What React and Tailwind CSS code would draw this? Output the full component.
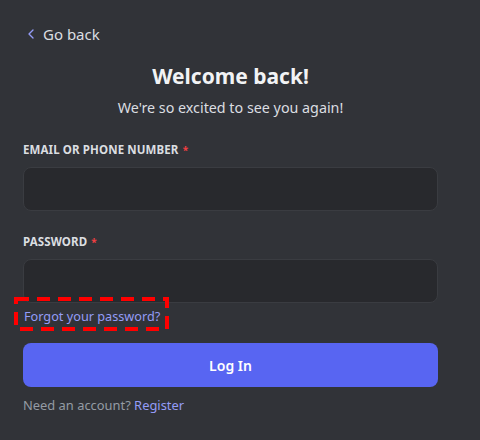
import React from 'react';
import { ChevronLeft } from 'lucide-react';

export default function App() {
    return (
        <div className="w-[480px] h-[440px] bg-[#313338] pl-[23px] pr-[42px] pt-[24px] font-['Noto_Sans','Open_Sans',sans-serif] overflow-hidden">
            {/* back link */}
            <div className="flex items-center h-[20px] text-[15px] text-[#dbdee1]">
                <ChevronLeft size={16} strokeWidth={2} className="text-[#949cf7] mr-[4px]" />
                <span>Go back</span>
            </div>

            <h1 className="mt-[17px] text-center text-[21px] leading-[30px] font-bold text-[#f2f3f5]">Welcome back!</h1>
            <p className="mt-[7px] text-center text-[14.3px] leading-[20px] text-[#dbdee1]">We're so excited to see you again!</p>

            <label className="block mt-[24px] text-[11.5px] leading-[16px] font-bold tracking-[0.01em] text-[#dbdee1] uppercase">
                Email or Phone Number <span className="text-[#f23f42] text-[10px] ml-[1px] align-top">*</span>
            </label>
            <input className="block w-full mt-[9px] h-[44px] rounded-[8px] bg-[#28292d] border border-[#3a3c41] outline-none px-3 text-[#dbdee1]" />

            <label className="block mt-[23px] text-[11.5px] leading-[16px] font-bold tracking-[0.01em] text-[#dbdee1] uppercase">
                Password <span className="text-[#f23f42] text-[10px] ml-[1px] align-top">*</span>
            </label>
            <input type="password" className="block w-full mt-[9px] h-[44px] rounded-[8px] bg-[#28292d] border border-[#3a3c41] outline-none px-3 text-[#dbdee1]" />

            <div className="relative mt-[3px] h-[20px]">
                <a className="absolute left-[1px] top-0 text-[12.7px] leading-[20px] text-[#949cf7]">Forgot your password?</a>
                {/* annotation box */}
                <svg className="absolute left-[-9px] top-[-9px]" width="155" height="34" viewBox="0 0 155 34">
                    <rect x="2" y="2" width="151" height="30" fill="none" stroke="#ff0000" strokeWidth="4" strokeDasharray="13 8" />
                </svg>
            </div>

            <button className="block w-full mt-[17px] h-[44px] rounded-[8px] bg-[#5865f2] text-white text-[14px] font-semibold">
                Log In
            </button>

            <p className="mt-[8px] text-[12.9px] leading-[20px] text-[#949ba4]">
                Need an account? <span className="text-[#949cf7]">Register</span>
            </p>
        </div>
    );
}
